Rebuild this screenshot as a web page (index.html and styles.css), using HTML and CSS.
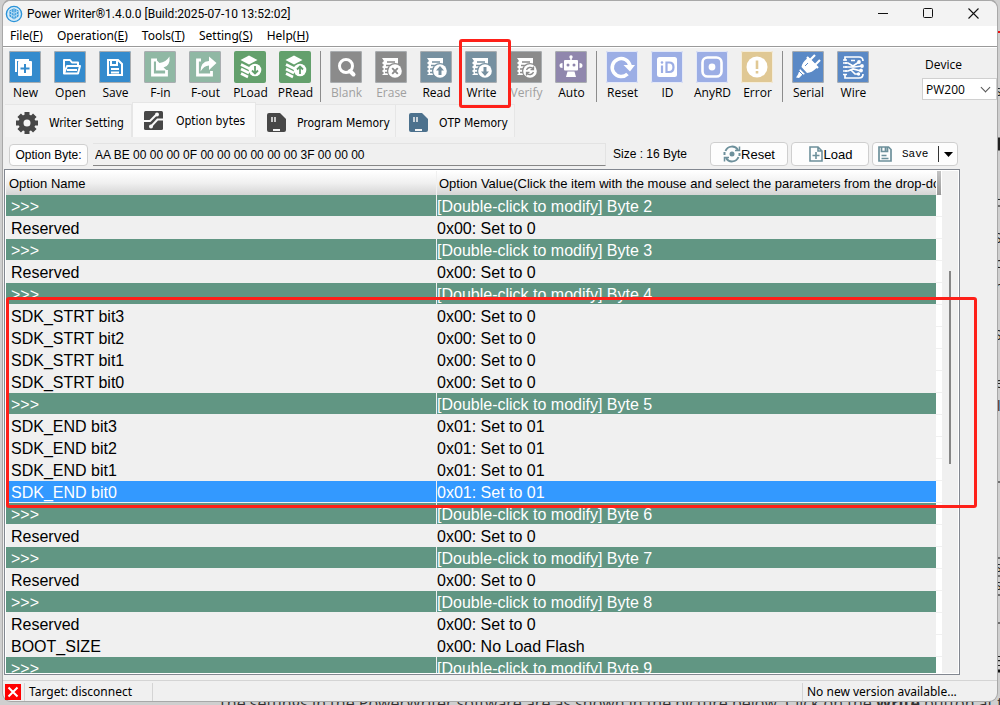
FILE: index.html
```html
<!DOCTYPE html>
<html lang="en">
<head>
<meta charset="utf-8">
<title>Power Writer</title>
<link rel="stylesheet" href="styles.css">
</head>
<body>
<svg class="backdrop-edge" width="6" height="705" viewBox="0 0 6 705" aria-hidden="true">
  <path d="M0 32h6" stroke="#e11" stroke-width="2"/>
  <path d="M0 144h6" stroke="#222" stroke-width="13"/>
  <path d="M0 206h6M0 482h6M0 576h6M0 595h6M0 623h6M0 558h6" stroke="#111"/>
  <path d="M0 671h6" stroke="#111" stroke-width="3"/>
  <g font-family="Open Sans, sans-serif" font-size="14" fill="#222">
    <text x="-1" y="96">s</text><text x="-1" y="200">u</text><text x="-2" y="243">S</text><text x="-1" y="268">o</text><text x="-1" y="292">n</text><text x="-2" y="340">S</text><text x="-1" y="388">e</text><text x="1" y="411">l</text><text x="-1" y="572">s</text><text x="-1" y="590">s</text><text x="-2" y="666">E</text>
  </g>
</svg>
<p class="backdrop-text">The settings in the PowerWriter software are as shown in the picture below. Click on the <b>Write</b> button at t</p>

<main class="window">
  <header class="titlebar">
    <svg width="18" height="18" viewBox="0 0 18 18" aria-hidden="true">
      <circle cx="9" cy="9" r="7.6" fill="#d6ecf9" stroke="#2a93d8" stroke-width="1.4"/>
      <path d="M9 3.2l4.6 2.4v5.6L9 14.6l-4.6-3.4V5.6z" fill="#3b9bdc"/>
      <path d="M9 3.4v11M4.500 6L9 8.300 13.500 6M6.700 4.600v8M11.300 4.600v8M4.500 9L9 11.500 13.500 9" fill="none" stroke="#d6ecf9" stroke-width=".7"/>
    </svg>
    <h1>Power Writer®1.4.0.0 [Build:2025-07-10 13:52:02]</h1>
    <div class="window-buttons">
      <button aria-label="Minimize"><svg width="11" height="11" viewBox="0 0 11 11"><path d="M0 5.5h10" stroke="#111"/></svg></button>
      <button aria-label="Maximize"><svg width="11" height="11" viewBox="0 0 11 11"><rect x=".5" y=".5" width="9" height="9" rx="1" fill="none" stroke="#111"/></svg></button>
      <button aria-label="Close"><svg width="11" height="11" viewBox="0 0 11 11"><path d="M.5.5l10 10M10.5.5l-10 10" stroke="#111" stroke-width="1.1"/></svg></button>
    </div>
  </header>

  <nav class="menubar">
    <button>File(<u>F</u>)</button>
    <button>Operation(<u>E</u>)</button>
    <button>Tools(<u>T</u>)</button>
    <button>Setting(<u>S</u>)</button>
    <button>Help(<u>H</u>)</button>
  </nav>

  <div class="toolbar">
    <button class="tool"><svg class="ico blue" viewBox="0 0 32 32"><path d="M7 21V9h13" fill="none" stroke="#fff" stroke-width="2"/><rect x="9" y="10" width="14" height="15" rx="1" fill="#fff"/><path d="M16 13v9M11.500 17.500h9" stroke="#348bcd" stroke-width="2"/></svg>New</button>
    <button class="tool"><svg class="ico blue" viewBox="0 0 32 32"><path d="M10 22.500V9h6l2 2.500h6V14M10 22.500l3-7.500h13l-2 7.500zM13 19h10" fill="none" stroke="#fff" stroke-width="2" stroke-linejoin="round"/></svg>Open</button>
    <button class="tool"><svg class="ico blue" viewBox="0 0 32 32"><path d="M9 9h10l4 4v11H9z" fill="none" stroke="#fff" stroke-width="2"/><path d="M12 9v5h6V9M12 18h8M12 21.500h8" fill="none" stroke="#fff" stroke-width="2"/></svg>Save</button>
    <button class="tool"><svg class="ico mint" viewBox="0 0 32 32"><path d="M13 9H8.500v15h14v-5" fill="none" stroke="#fff" stroke-width="2.800"/><path d="M12 19.500V8.500l3.500 3.500Q22 11 25.500 5.500q1 9.500-6 11l3.500 3z" fill="#fff"/></svg>F-in</button>
    <button class="tool"><svg class="ico mint" viewBox="0 0 32 32"><path d="M12 9H8.500v15h14v-4" fill="none" stroke="#fff" stroke-width="2.800"/><path d="M11.500 20.500q0-10 8.500-10.500V5.500l7.500 6.500-7.500 7v-4.500q-5 0-8.500 6z" fill="#fff"/></svg>F-out</button>
    <button class="tool"><svg class="ico green" viewBox="0 0 32 32"><path d="M15 4.500l8.500 4.500-8.500 4.500L6.500 9z" fill="#fff"/><path d="M7 13.500l8 4 6-3M7 18l8 4M7 22.500l7 3.500" fill="none" stroke="#fff" stroke-width="2.600"/><circle cx="21" cy="19" r="6.300" fill="#fff"/><path d="M21 15v7M18 19.500l3 3 3-3" fill="none" stroke="#63a06c" stroke-width="1.800"/></svg>PLoad</button>
    <button class="tool"><svg class="ico green" viewBox="0 0 32 32"><path d="M15 4.500l8.500 4.500-8.500 4.500L6.500 9z" fill="#fff"/><path d="M7 13.500l8 4 6-3M7 18l8 4M7 22.500l7 3.500" fill="none" stroke="#fff" stroke-width="2.600"/><circle cx="21" cy="19" r="6.300" fill="#fff"/><path d="M21 23v-7M18 18.500l3-3 3 3" fill="none" stroke="#63a06c" stroke-width="1.800"/></svg>PRead</button>
    <span class="sep"></span>
    <button class="tool" disabled><svg class="ico gray" viewBox="0 0 32 32"><circle cx="16" cy="15" r="6.500" fill="none" stroke="#fff" stroke-width="3"/><path d="M20 20l3.500 3.500" stroke="#fff" stroke-width="4" stroke-linecap="round"/></svg>Blank</button>
    <button class="tool" disabled><svg class="ico gray" viewBox="0 0 32 32"><path d="M7 7h16v17H7l2-2-2-2 2-2-2-2 2-2-2-2 2-2z" fill="#fff"/><circle cx="20" cy="20" r="8" fill="#8b8b8b"/><path d="M12 11h8M11 14.500h5M10 18h3M10 21.500h3" stroke="#8b8b8b" stroke-width="1.300"/><circle cx="20" cy="20" r="6.800" fill="#fff"/><path d="M17.200 17.200l5.600 5.600M22.800 17.200l-5.600 5.600" stroke="#8b8b8b" stroke-width="1.900"/></svg>Erase</button>
    <button class="tool"><svg class="ico slate" viewBox="0 0 32 32"><path d="M7 7h16v17H7l2-2-2-2 2-2-2-2 2-2-2-2 2-2z" fill="#fff"/><circle cx="20" cy="20" r="8" fill="#7690a0"/><path d="M12 11h8M11 14.500h5M10 18h3M10 21.500h3" stroke="#7690a0" stroke-width="1.300"/><circle cx="20" cy="20" r="6.800" fill="#fff"/><path d="M20 15l4 4.500h-2.500V24h-3v-4.500H16z" fill="#7690a0"/></svg>Read</button>
    <button class="tool marked"><svg class="ico slate" viewBox="0 0 32 32"><path d="M7 7h16v17H7l2-2-2-2 2-2-2-2 2-2-2-2 2-2z" fill="#fff"/><circle cx="20" cy="20" r="8" fill="#7690a0"/><path d="M12 11h8M11 14.500h5M10 18h3M10 21.500h3" stroke="#7690a0" stroke-width="1.300"/><circle cx="20" cy="20" r="6.800" fill="#fff"/><path d="M20 25l4-4.500h-2.500V16h-3v4.500H16z" fill="#7690a0"/></svg>Write</button>
    <button class="tool" disabled><svg class="ico gray" viewBox="0 0 32 32"><path d="M7 7h16v17H7l2-2-2-2 2-2-2-2 2-2-2-2 2-2z" fill="#fff"/><circle cx="20" cy="20" r="8" fill="#8b8b8b"/><path d="M12 11h8M11 14.500h5M10 18h3M10 21.500h3" stroke="#8b8b8b" stroke-width="1.300"/><circle cx="20" cy="20" r="6.800" fill="#fff"/><path d="M16.500 19a4 4 0 0 1 6.500-1.500M23.500 21a4 4 0 0 1-6.500 1.500M23.500 15.500v3h-3M16.500 24.500v-3h3" fill="none" stroke="#8b8b8b" stroke-width="1.300"/></svg>Verify</button>
    <button class="tool"><svg class="ico purple" viewBox="0 0 32 32"><path d="M16 9V6.500" stroke="#fff" stroke-width="1.500"/><circle cx="16" cy="6" r="1.700" fill="#fff"/><rect x="9" y="9" width="14" height="10.500" rx="1" fill="#fff"/><path d="M7.500 12v5q-3 0-3-2.500t3-2.500zM24.500 12v5q3 0 3-2.500t-3-2.500z" fill="#fff"/><path d="M12.500 20.500h7L21 26H11z" fill="#fff"/><circle cx="13" cy="14" r="1.500" fill="#9087ad"/><circle cx="19" cy="14" r="1.500" fill="#9087ad"/></svg>Auto</button>
    <span class="sep"></span>
    <button class="tool"><svg class="ico light" viewBox="0 0 32 32"><path d="M21.500 23A9 9 0 1 1 24 14.500" fill="none" stroke="#fff" stroke-width="3.600"/><path d="M17.500 14h11.500l-5 6.500z" fill="#fff"/></svg>Reset</button>
    <button class="tool"><svg class="ico light" viewBox="0 0 32 32"><rect x="6" y="6" width="20" height="20" rx="2.500" fill="#fff"/><path d="M11 14.500V22M15.500 11.500V21h2.500q4.500 0 4.500-4.800T18 11.500z" fill="none" stroke="#9caee5" stroke-width="2.200"/><circle cx="11" cy="11.500" r="1.300" fill="#9caee5"/></svg>ID</button>
    <button class="tool"><svg class="ico light" viewBox="0 0 32 32"><rect x="6.500" y="6.500" width="19" height="19" rx="5" fill="none" stroke="#fff" stroke-width="2.600"/><circle cx="16" cy="16" r="3.400" fill="#fff"/></svg>AnyRD</button>
    <button class="tool"><svg class="ico sand" viewBox="0 0 32 32"><circle cx="16" cy="16" r="10.500" fill="#fff"/><path d="M16 9.500v8.500M16 20v2.500" stroke="#e0c894" stroke-width="2.600"/></svg>Error</button>
    <span class="sep"></span>
    <button class="tool"><svg class="ico royal" viewBox="0 0 32 32"><path d="M9.500 16q1-5 5-8l1.500-2 10 10-2 1.500q-4 4-9 4.500z" fill="#fff"/><path d="M18 9l5-5M23 14l5-5M15 6l11 11" stroke="#fff" stroke-width="2.200"/><path d="M8 18l5 5-3 1-3 3-3-.500 2-3z" fill="#fff"/><path d="M7 20l4 4M16 12l-3 3" stroke="#5a89c6" stroke-width="1"/></svg>Serial</button>
    <button class="tool"><svg class="ico royal" viewBox="0 0 32 32"><path d="M8 9.500V6h14q4 0 4 4M8 23v4h14q4 0 4-4M8 12h3l5 3 6-4M8 16h9l8-1M8 20h3l5-2 8 2M14 19l4 4h4M14 9.500h4" fill="none" stroke="#fff" stroke-width="1.700"/><path d="M6 9h4M6 12h4M6 16h4M6 20h4M6 23.500h4" stroke="#fff" stroke-width="1.700"/><circle cx="22" cy="11" r="1.900" fill="#fff"/><circle cx="25" cy="15" r="1.900" fill="#fff"/><circle cx="24" cy="19.500" r="1.900" fill="#fff"/><circle cx="21.500" cy="23" r="1.700" fill="#fff"/></svg>Wire</button>
    <div class="device">
      <label for="device">Device</label>
      <select id="device"><option>PW200</option></select>
    </div>
  </div>

  <div class="tabs" role="tablist">
    <button class="tab tab-writer" role="tab"><svg width="22" height="22" viewBox="0 0 22 22"><circle cx="11" cy="11" r="6" fill="none" stroke="#474747" stroke-width="5"/><path d="M11 0v5M11 17v5M0 11h5M17 11h5M3.200 3.200l3 3M15.800 15.800l3 3M18.800 3.200l-3 3M6.200 15.800l-3 3" stroke="#474747" stroke-width="5"/><circle cx="11" cy="11" r="3" fill="#f4f4f4"/></svg>Writer Setting</button>
    <button class="tab tab-option active" role="tab" aria-selected="true"><svg width="22" height="22" viewBox="0 0 22 22"><rect x="1" y="1" width="19" height="19" rx="1.500" fill="#474747"/><path d="M0 11h7l6-6M21 9.500h-6.500l-6.500 7" fill="none" stroke="#fafafa" stroke-width="2"/><circle cx="14" cy="4.500" r="2" fill="#fafafa"/><circle cx="8" cy="16.500" r="2" fill="#fafafa"/></svg>Option bytes</button>
    <button class="tab tab-program" role="tab"><svg width="22" height="22" viewBox="0 0 22 22"><path d="M1 3q0-2 2-2h11l6 6v11q0 2-2 2H3q-2 0-2-2z" fill="#474747"/><path d="M6 5v5M9 5v5" stroke="#f4f4f4" stroke-width="1.500"/><path d="M7 18h7" stroke="#f4f4f4" stroke-width="2"/></svg>Program Memory</button>
    <button class="tab tab-otp" role="tab"><svg width="22" height="22" viewBox="0 0 22 22"><path d="M1 3q0-2 2-2h11l6 6v11q0 2-2 2H3q-2 0-2-2z" fill="#4c718d"/><path d="M6 5v5M9 5v5" stroke="#f4f4f4" stroke-width="1.500"/><path d="M7 18h7" stroke="#f4f4f4" stroke-width="2"/></svg>OTP Memory</button>
  </div>

  <div class="byte-row">
    <button class="push option-byte">Option Byte:</button>
    <input class="bytes" aria-label="Option Byte" readonly value="AA BE 00 00 00 0F 00 00 00 00 00 00 3F 00 00 00">
    <span class="size">Size : 16 Byte</span>
    <button class="push action"><svg width="18" height="18" viewBox="0 0 18 18"><path d="M2.500 6A7 7 0 0 1 15 5M15.500 12A7 7 0 0 1 3 13M1.500 10V7M16.500 8v3" fill="none" stroke="#6d909b" stroke-width="2"/><path d="M12 5.500h4.500V1.500M6 12.500H1.500v4" fill="none" stroke="#6d909b" stroke-width="1.500"/><circle cx="9" cy="9" r="2.500" fill="#6d909b"/></svg>Reset</button>
    <button class="push action"><svg width="16" height="18" viewBox="0 0 16 18"><path d="M2 2h8l4 4v10H2zM10 2v4h4M8 7v7M4.500 10.500h7" fill="none" stroke="#6d909b" stroke-width="1.600"/></svg>Load</button>
    <div class="push split">
      <button class="split-main"><svg width="16" height="18" viewBox="0 0 16 18"><path d="M2 2h9.500L14 4.500V16H2z" fill="none" stroke="#6d909b" stroke-width="1.700"/><path d="M4.500 2v4.500h6V2M8.500 2v4" fill="none" stroke="#6d909b" stroke-width="1.700"/><path d="M4.500 10.500h5M4.500 13.500h7" stroke="#6d909b" stroke-width="1.300"/></svg><span>Save</span></button>
      <button class="split-arrow" aria-label="Save options"><svg width="9" height="5" viewBox="0 0 9 5"><path d="M0 0h9L4.500 5z"/></svg></button>
    </div>
  </div>

  <section class="list-wrap">
    <div class="list">
      <div class="list-view">
        <table class="options">
          <colgroup><col class="name-col"><col></colgroup>
          <thead><tr><th>Option Name</th><th>Option Value(Click the item with the mouse and select the parameters from the drop-down list)</th></tr></thead>
          <tbody>
            <tr class="group"><td>&gt;&gt;&gt;</td><td>[Double-click to modify] Byte 2</td></tr>
            <tr><td>Reserved</td><td>0x00: Set to 0</td></tr>
            <tr class="group"><td>&gt;&gt;&gt;</td><td>[Double-click to modify] Byte 3</td></tr>
            <tr><td>Reserved</td><td>0x00: Set to 0</td></tr>
            <tr class="group"><td>&gt;&gt;&gt;</td><td>[Double-click to modify] Byte 4</td></tr>
            <tr><td>SDK_STRT bit3</td><td>0x00: Set to 0</td></tr>
            <tr><td>SDK_STRT bit2</td><td>0x00: Set to 0</td></tr>
            <tr><td>SDK_STRT bit1</td><td>0x00: Set to 0</td></tr>
            <tr><td>SDK_STRT bit0</td><td>0x00: Set to 0</td></tr>
            <tr class="group"><td>&gt;&gt;&gt;</td><td>[Double-click to modify] Byte 5</td></tr>
            <tr><td>SDK_END bit3</td><td>0x01: Set to 01</td></tr>
            <tr><td>SDK_END bit2</td><td>0x01: Set to 01</td></tr>
            <tr><td>SDK_END bit1</td><td>0x01: Set to 01</td></tr>
            <tr class="selected"><td>SDK_END bit0</td><td>0x01: Set to 01</td></tr>
            <tr class="group"><td>&gt;&gt;&gt;</td><td>[Double-click to modify] Byte 6</td></tr>
            <tr><td>Reserved</td><td>0x00: Set to 0</td></tr>
            <tr class="group"><td>&gt;&gt;&gt;</td><td>[Double-click to modify] Byte 7</td></tr>
            <tr><td>Reserved</td><td>0x00: Set to 0</td></tr>
            <tr class="group"><td>&gt;&gt;&gt;</td><td>[Double-click to modify] Byte 8</td></tr>
            <tr><td>Reserved</td><td>0x00: Set to 0</td></tr>
            <tr><td>BOOT_SIZE</td><td>0x00: No Load Flash</td></tr>
            <tr class="group"><td>&gt;&gt;&gt;</td><td>[Double-click to modify] Byte 9</td></tr>
          </tbody>
        </table>
      </div>
      <div class="gutter"><div class="gutter-head"></div></div>
      <div class="scrollbar"><div class="thumb"></div></div>
    </div>
    <div class="highlight"></div>
  </section>

  <footer class="statusbar">
    <svg width="16" height="16" viewBox="0 0 16 16" aria-hidden="true"><path d="M0 0h16v16H0z" fill="#f00"/><path d="M3.500 3.500l9 9M12.500 3.500l-9 9" stroke="#fff" stroke-width="2"/></svg>
    <span class="target">Target: disconnect</span>
    <span class="version">No new version available...</span>
  </footer>
</main>
</body>
</html>
```
FILE: styles.css
```css
* { box-sizing: border-box; }

body {
  margin: 0;
  height: 100vh;
  padding: 0 3px 4px;
  overflow: hidden;
  display: flex;
  position: relative;
  background: #cfcfcf;
  color: #000;
  font-family: "Open Sans", "Noto Sans", sans-serif;
  font-size: 12px;
}

button {
  margin: 0;
  padding: 0;
  border: 0;
  background: none;
  color: inherit;
  font: inherit;
  white-space: nowrap;
}

svg { flex: none; }

.backdrop-edge { position: absolute; right: -2px; top: 0; }

.backdrop-text {
  position: absolute;
  left: 218px;
  bottom: -8px;
  margin: 0;
  font: 16px/20px "Open Sans", sans-serif;
  white-space: nowrap;
  color: #333;
}

.window {
  flex: 1;
  min-width: 0;
  display: flex;
  flex-direction: column;
  position: relative;
  background: #f0f0f0;
  border-top: 1px solid #a8a8a8;
  border-radius: 8px;
  box-shadow: 0 0 0 1px #a8a8a8;
}

.titlebar {
  display: flex;
  align-items: center;
  height: 25px;
  padding: 0 1px 0 2px;
  background: #f3f3f3;
  border-radius: 8px 8px 0 0;
}
.titlebar h1 { margin: 0 0 0 4px; font: 12px Roboto, sans-serif; white-space: nowrap; }
.window-buttons { margin-left: auto; display: flex; height: 100%; }
.window-buttons button { width: 45px; display: flex; align-items: center; justify-content: center; }

.menubar {
  display: flex;
  gap: 14px;
  height: 21px;
  padding: 0 7px 2px;
  background: #fff;
  border-bottom: 1px solid #9a9a9a;
  font-family: "Noto Sans", sans-serif;
}

.toolbar {
  display: flex;
  height: 56px;
  padding-top: 3px;
  border-top: 1px solid #fff;
}
.tool {
  width: 45px;
  flex: none;
  display: flex;
  flex-direction: column;
  align-items: center;
  line-height: 18px;
  position: relative;
}
.tool:disabled { color: #a0a0a0; }
.ico {
  width: 32px;
  height: 32px;
  margin: 0 1px 1px 0;
  border-radius: 2px;
  box-shadow: inset 0 0 0 1px #a9adb0;
}
.blue { background: #348bcd; }
.mint { background: #90b8a4; }
.green { background: #63a06c; box-shadow: none; }
.gray { background: #8b8b8b; }
.slate { background: #7690a0; }
.purple { background: #9087ad; }
.light { background: #9caee5; box-shadow: inset 0 0 0 1px #e4e9f8; }
.sand { background: #e0c894; box-shadow: inset 0 0 0 1px #f5eddb; }
.royal { background: #5a89c6; }

.marked { z-index: 1; }
.marked::after {
  content: "";
  position: absolute;
  inset: -12px -7px -5px 0;
  border: 3px solid #fe2019;
  border-radius: 3px;
}
.sep { flex: none; width: 1px; height: 51px; margin: 0 3px 0 2px; background: #8c8c8c; }

.device {
  position: relative;
  width: 75px;
  margin-left: auto;
  display: flex;
  flex-direction: column;
  gap: 4px;
  padding-top: 5px;
}
.device label { padding-left: 3px; line-height: 18px; }
.device select {
  height: 22px;
  padding: 0 0 0 3px;
  border: 1px solid #d0d0d0;
  background: #fff;
  color: #000;
  font: inherit;
  appearance: none;
}
.device::after {
  content: "";
  position: absolute;
  right: 8px;
  top: 33px;
  width: 6px;
  height: 6px;
  border: solid #555;
  border-width: 0 1px 1px 0;
  transform: rotate(45deg);
}

.tabs {
  display: flex;
  align-items: flex-end;
  height: 34px;
  padding-left: 2px;
  font-family: "DejaVu Sans Condensed", "Open Sans", sans-serif;
}
.tab {
  height: 33px;
  display: flex;
  align-items: center;
  gap: 11px;
  padding: 3px 0 0 10px;
  background: #f3f3f3;
  border: solid #e6e6e6;
  border-width: 1px 1px 0 0;
}
.tab-writer { width: 127px; padding-left: 11px; }
.tab-option { width: 124px; }
.tab-program { width: 140px; gap: 9px; }
.tab-otp { width: 119px; padding-left: 12px; gap: 9px; }
.tab.active { height: 35px; padding-bottom: 2px; background: #fafafa; border-left-width: 1px; }

.byte-row {
  display: flex;
  align-items: flex-end;
  height: 32px;
  padding: 0 39px 3px 6px;
  font-family: "Liberation Sans", Arial, sans-serif;
}
.push {
  height: 24px;
  display: flex;
  align-items: center;
  justify-content: center;
  background: #fdfdfd;
  border: 1px solid #cfcfcf;
  border-radius: 4px;
  font-size: 13px;
}
.option-byte { width: 79px; height: 22px; font-size: 12px; }
.bytes {
  flex: 1;
  min-width: 0;
  height: 23px;
  margin: 0 7px 0 5px;
  padding: 0 2px;
  border: solid #e3e3e3;
  border-width: 1px 1px 1px 0;
  border-bottom-color: #868686;
  background: #f0f0f0;
  color: #000;
  font: inherit;
}
.size { width: 97px; line-height: 23px; }
.action { width: 78px; margin-right: 3px; }
.split { width: 86px; }
.split-main { flex: 1; height: 100%; display: flex; align-items: center; padding-left: 4px; font: 11px "Liberation Mono", monospace; }
.split-main span { margin-left: 9px; }
.split-arrow { width: 19px; height: 16px; display: flex; align-items: center; justify-content: center; border-left: 1px solid #333; }

.list-wrap { flex: 1; min-height: 0; position: relative; margin: 0 37px 0 1px; display: flex; }
.list {
  flex: 1;
  min-width: 0;
  display: flex;
  border: 1px solid #828790;
  box-shadow: inset 0 0 0 1px #fff;
  padding: 1px;
}
.list-view { flex: 1; min-width: 0; overflow: hidden; }
.options {
  width: 100%;
  table-layout: fixed;
  border-collapse: separate;
  border-spacing: 0;
  font: 16px/18px "Liberation Sans", Arial, sans-serif;
}
.name-col { width: 431px; }
.options th {
  height: 24px;
  padding: 1px 0 0 3px;
  overflow: hidden;
  text-align: left;
  white-space: nowrap;
  font-size: 13px;
  font-weight: 400;
  background: linear-gradient(#fff, #f0f0f0 50%, #d4d4d4);
}
.options td { height: 22px; padding: 3px 0 0 5px; border-bottom: 1px solid #f0f0f0; white-space: nowrap; }
.options tr > :first-child { border-right: 1px solid #f0f0f0; }
.options th + th { padding-left: 2px; }
.options td + td { padding-left: 0; }
.options .group td { background: #619683; color: #fff; }
.options .selected td { background: #39f; color: #fff; }
.gutter {
  width: 6px;
  background: repeating-linear-gradient(#fff 0 21px, #f0f0f0 21px 22px) 0 2px;
}
.gutter-head { width: 4px; height: 24px; margin-left: 1px; background: linear-gradient(#c4c4c4, #989898); }
.scrollbar { width: 16px; padding: 100px 0 0 7px; background: #f0f0f0; }
.thumb { width: 2px; height: 193px; background: #868686; }

.highlight {
  position: absolute;
  left: 2px;
  right: -17px;
  top: 128px;
  height: 211px;
  border: 3px solid #fe2019;
  border-radius: 3px;
}

.statusbar {
  display: flex;
  align-items: center;
  height: 21px;
  margin-top: 5px;
  padding: 2px 0 0 2px;
  border-top: 1px solid #d4d4d4;
  font-family: "Noto Sans", sans-serif;
}
.statusbar span { line-height: 18px; padding-left: 4px; border-left: 1px solid #d4d4d4; }
.target { width: 129px; margin-left: 3px; border-right: 1px solid #d4d4d4; }
.version { width: 195px; margin-left: auto; }
```
